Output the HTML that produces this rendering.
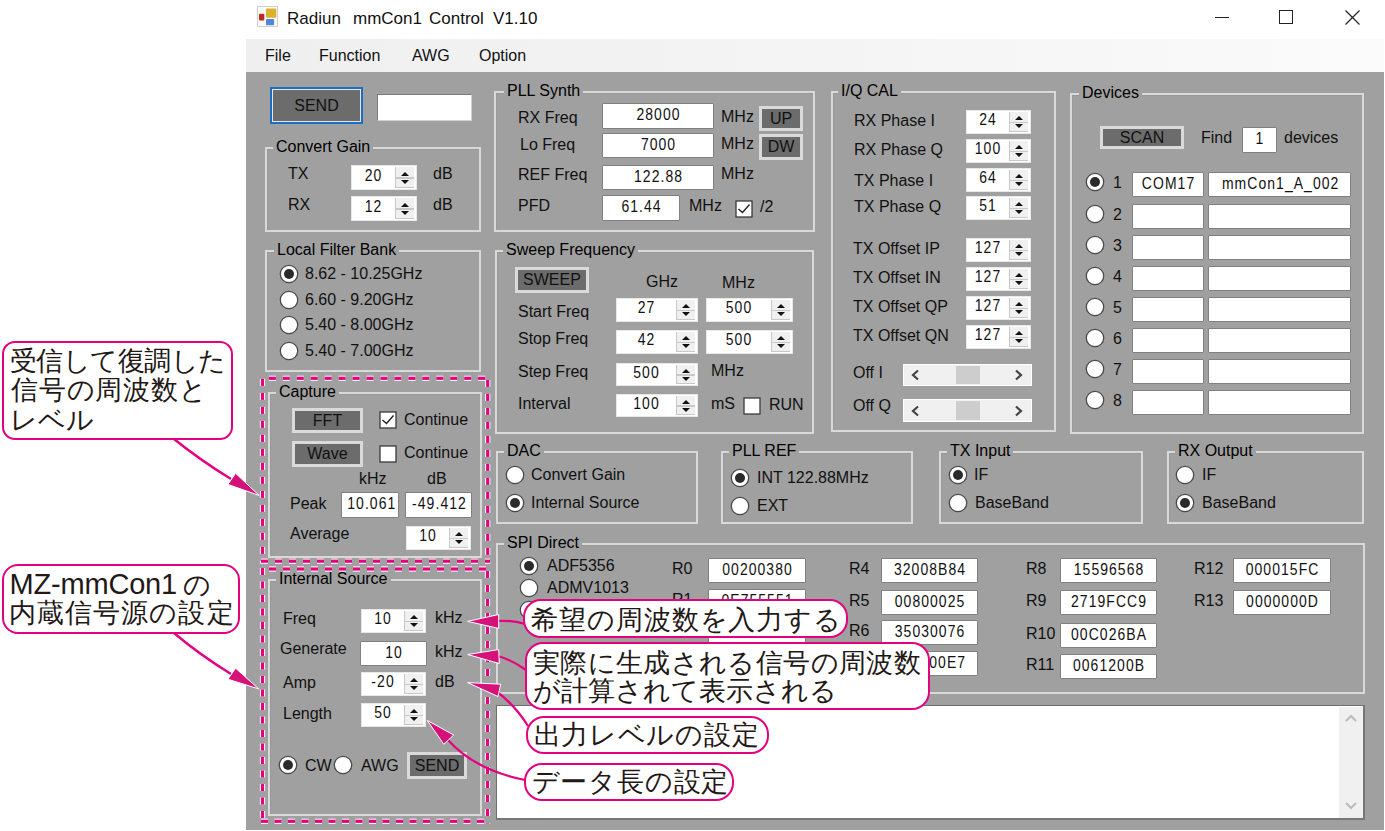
<!DOCTYPE html>
<html><head><meta charset="utf-8"><style>
html,body{margin:0;padding:0;width:1385px;height:831px;overflow:hidden;background:#fff;}
body{position:relative;font-family:"Liberation Sans", sans-serif;}
.t{position:absolute;white-space:nowrap;}
.c{position:absolute;text-align:center;white-space:nowrap;color:#111;}
.co{position:absolute;box-sizing:border-box;background:#fff;border:2.6px solid #e4007f;color:#231815;font-size:27.5px;line-height:28.5px;white-space:nowrap;}
</style></head><body>
<div style="position:absolute;left:246px;top:0px;width:1138px;height:39px;box-sizing:border-box;background:#fff;"></div><svg style="position:absolute;left:257px;top:6px" width="21" height="21"><rect x="0.5" y="0.5" width="20" height="20" fill="#fafafa" stroke="#cfcfcf"/><rect x="9" y="2.6" width="10.3" height="9.1" rx="1" fill="#ddb02a"/><rect x="2" y="7.8" width="5.3" height="6.7" rx="1" fill="#bf2a22"/><rect x="9" y="12.9" width="8.1" height="6.3" rx="1" fill="#4f88d6"/></svg><div class="t" style="left:287px;top:10px;font-size:17px;line-height:17px;color:#111;">Radiun</div><div class="t" style="left:353px;top:10px;font-size:17px;line-height:17px;color:#111;">mmCon1</div><div class="t" style="left:429px;top:10px;font-size:17px;line-height:17px;color:#111;">Control</div><div class="t" style="left:493px;top:10px;font-size:17px;line-height:17px;color:#111;">V1.10</div><div style="position:absolute;left:1215px;top:17px;width:14px;height:1px;box-sizing:border-box;background:#222;"></div><div style="position:absolute;left:1279px;top:10px;width:14px;height:14px;box-sizing:border-box;border:1px solid #222;"></div><svg style="position:absolute;left:1344px;top:9px" width="17" height="17"><path d="M1.5 1.5 L15.5 15.5 M15.5 1.5 L1.5 15.5" stroke="#222" stroke-width="1.2"/></svg><div style="position:absolute;left:246px;top:39px;width:1138px;height:33px;box-sizing:border-box;background:linear-gradient(90deg,#efefef,#f4f4f4 50%,#fbfbfb);"></div><div class="t" style="left:265px;top:48px;font-size:16px;line-height:16px;color:#111;">File</div><div class="t" style="left:319px;top:48px;font-size:16px;line-height:16px;color:#111;">Function</div><div class="t" style="left:412px;top:48px;font-size:16px;line-height:16px;color:#111;">AWG</div><div class="t" style="left:479px;top:48px;font-size:16px;line-height:16px;color:#111;">Option</div><div style="position:absolute;left:246px;top:72px;width:1138px;height:758px;box-sizing:border-box;background:#a0a0a0;"></div><div style="position:absolute;left:270px;top:87px;width:93px;height:37px;box-sizing:border-box;border:2px solid #1b6fc2;"></div><div style="position:absolute;left:272px;top:89px;width:89px;height:33px;box-sizing:border-box;background:#6c6c6c;border:1px solid #e6e6e6;"></div><div class="c" style="left:270px;top:87px;width:93px;height:37px;line-height:37px;font-size:16px;">SEND</div><div style="position:absolute;left:377px;top:94px;width:95px;height:27px;box-sizing:border-box;background:#fff;border:1px solid #e6e6e6;"></div><div style="position:absolute;left:377px;top:94px;width:95px;height:27px;box-sizing:border-box;border:1px solid #7c7c7c;border-right-color:#d0d0d0;border-bottom-color:#d0d0d0;"></div><div style="position:absolute;left:265px;top:147px;width:216px;height:85px;box-sizing:border-box;border:2px solid #d9d9d9;"></div><div style="position:absolute;left:267px;top:149px;width:212px;height:81px;box-sizing:border-box;border-left:1px solid #999;border-top:1px solid #999;"></div><div class="t gt" style="left:273px;top:138px;font-size:16px;line-height:18px;padding:0 3px;background:#a0a0a0">Convert Gain</div><div class="t" style="left:288px;top:166px;font-size:16px;line-height:16px;color:#111;">TX</div><div style="position:absolute;left:351px;top:165px;width:66px;height:25px;box-sizing:border-box;background:#fff;border:1px solid #e8e8e8;"></div><div style="position:absolute;left:395px;top:167px;width:19px;height:21px;box-sizing:border-box;background:#f0f0f0;border-left:1px solid #c8c8c8;border-bottom:1px solid #c8c8c8;"></div><div style="position:absolute;left:395px;top:177.0px;width:19px;height:1.5px;box-sizing:border-box;background:#c8c8c8;"></div><svg style="position:absolute;left:399.5px;top:169.5px" width="10" height="16"><path d="M1 6 L5 2 L9 6 Z M1 10 L9 10 L5 14 Z" fill="#111"/></svg><div class="c" style="left:351px;top:162.5px;width:44px;height:25px;line-height:25px;font-size:17px;letter-spacing:1.3px;transform:scaleX(.82);text-indent:1.3px">20</div><div class="t" style="left:433px;top:166px;font-size:16px;line-height:16px;color:#111;">dB</div><div class="t" style="left:288px;top:197px;font-size:16px;line-height:16px;color:#111;">RX</div><div style="position:absolute;left:351px;top:196px;width:66px;height:25px;box-sizing:border-box;background:#fff;border:1px solid #e8e8e8;"></div><div style="position:absolute;left:395px;top:198px;width:19px;height:21px;box-sizing:border-box;background:#f0f0f0;border-left:1px solid #c8c8c8;border-bottom:1px solid #c8c8c8;"></div><div style="position:absolute;left:395px;top:208.0px;width:19px;height:1.5px;box-sizing:border-box;background:#c8c8c8;"></div><svg style="position:absolute;left:399.5px;top:200.5px" width="10" height="16"><path d="M1 6 L5 2 L9 6 Z M1 10 L9 10 L5 14 Z" fill="#111"/></svg><div class="c" style="left:351px;top:193.5px;width:44px;height:25px;line-height:25px;font-size:17px;letter-spacing:1.3px;transform:scaleX(.82);text-indent:1.3px">12</div><div class="t" style="left:433px;top:197px;font-size:16px;line-height:16px;color:#111;">dB</div><div style="position:absolute;left:265px;top:250px;width:216px;height:122px;box-sizing:border-box;border:2px solid #d9d9d9;"></div><div style="position:absolute;left:267px;top:252px;width:212px;height:118px;box-sizing:border-box;border-left:1px solid #999;border-top:1px solid #999;"></div><div class="t gt" style="left:274px;top:241px;font-size:16px;line-height:18px;padding:0 3px;background:#a0a0a0">Local Filter Bank</div><svg style="position:absolute;left:278.5px;top:264.0px" width="20" height="20"><circle cx="10" cy="10" r="8.7" fill="#fff" stroke="#4a4a4a" stroke-width="1.3"/><circle cx="10" cy="10" r="5" fill="#2a2a2a"/></svg><div class="t" style="left:305px;top:266px;font-size:16px;line-height:16px;color:#111;">8.62 - 10.25GHz</div><svg style="position:absolute;left:278.5px;top:289.6px" width="20" height="20"><circle cx="10" cy="10" r="8.7" fill="#fff" stroke="#4a4a4a" stroke-width="1.3"/></svg><div class="t" style="left:305px;top:292px;font-size:16px;line-height:16px;color:#111;">6.60 - 9.20GHz</div><svg style="position:absolute;left:278.5px;top:315.2px" width="20" height="20"><circle cx="10" cy="10" r="8.7" fill="#fff" stroke="#4a4a4a" stroke-width="1.3"/></svg><div class="t" style="left:305px;top:317px;font-size:16px;line-height:16px;color:#111;">5.40 - 8.00GHz</div><svg style="position:absolute;left:278.5px;top:340.8px" width="20" height="20"><circle cx="10" cy="10" r="8.7" fill="#fff" stroke="#4a4a4a" stroke-width="1.3"/></svg><div class="t" style="left:305px;top:343px;font-size:16px;line-height:16px;color:#111;">5.40 - 7.00GHz</div><div style="position:absolute;left:268px;top:392px;width:214px;height:166px;box-sizing:border-box;border:2px solid #d9d9d9;"></div><div style="position:absolute;left:270px;top:394px;width:210px;height:162px;box-sizing:border-box;border-left:1px solid #999;border-top:1px solid #999;"></div><div class="t gt" style="left:276px;top:383px;font-size:16px;line-height:18px;padding:0 3px;background:#a0a0a0">Capture</div><div style="position:absolute;left:292px;top:408px;width:71px;height:25px;box-sizing:border-box;background:#6c6c6c;border:3px solid #dadada;"></div><div class="c" style="left:292px;top:408px;width:71px;height:25px;line-height:25px;font-size:16px;">FFT</div><div style="position:absolute;left:292px;top:441px;width:71px;height:26px;box-sizing:border-box;background:#6c6c6c;border:3px solid #dadada;"></div><div class="c" style="left:292px;top:441px;width:71px;height:26px;line-height:26px;font-size:16px;">Wave</div><svg style="position:absolute;left:379px;top:411px" width="18" height="18"><rect x="1" y="1" width="16" height="16" fill="#fff" stroke="#3a3a3a" stroke-width="1.3"/><path d="M3.5 9 L7.5 12.5 L14.5 4.5" fill="none" stroke="#222" stroke-width="1.4"/></svg><div class="t" style="left:404px;top:412px;font-size:16px;line-height:16px;color:#111;">Continue</div><svg style="position:absolute;left:379px;top:445px" width="18" height="18"><rect x="1" y="1" width="16" height="16" fill="#fff" stroke="#3a3a3a" stroke-width="1.3"/></svg><div class="t" style="left:404px;top:445px;font-size:16px;line-height:16px;color:#111;">Continue</div><div class="t" style="left:359px;top:471px;font-size:16px;line-height:16px;color:#111;">kHz</div><div class="t" style="left:427px;top:471px;font-size:16px;line-height:16px;color:#111;">dB</div><div class="t" style="left:290px;top:496px;font-size:16px;line-height:16px;color:#111;">Peak</div><div style="position:absolute;left:341px;top:492px;width:58px;height:26px;box-sizing:border-box;background:#fff;border:1px solid #808080;border-radius:1px;"></div><div class="c" style="left:341px;top:490.5px;width:58px;height:26px;line-height:26px;font-size:17px;letter-spacing:1.3px;transform:scaleX(.82);text-indent:1.3px">10.061</div><div style="position:absolute;left:405px;top:492px;width:67px;height:26px;box-sizing:border-box;background:#fff;border:1px solid #808080;border-radius:1px;"></div><div class="c" style="left:405px;top:490.5px;width:67px;height:26px;line-height:26px;font-size:17px;letter-spacing:1.3px;transform:scaleX(.82);text-indent:1.3px">-49.412</div><div class="t" style="left:290px;top:526px;font-size:16px;line-height:16px;color:#111;">Average</div><div style="position:absolute;left:406px;top:526px;width:65px;height:24px;box-sizing:border-box;background:#fff;border:1px solid #e8e8e8;"></div><div style="position:absolute;left:449px;top:528px;width:19px;height:20px;box-sizing:border-box;background:#f0f0f0;border-left:1px solid #c8c8c8;border-bottom:1px solid #c8c8c8;"></div><div style="position:absolute;left:449px;top:537.5px;width:19px;height:1.5px;box-sizing:border-box;background:#c8c8c8;"></div><svg style="position:absolute;left:453.5px;top:530.0px" width="10" height="16"><path d="M1 6 L5 2 L9 6 Z M1 10 L9 10 L5 14 Z" fill="#111"/></svg><div class="c" style="left:406px;top:523.5px;width:43px;height:24px;line-height:24px;font-size:17px;letter-spacing:1.3px;transform:scaleX(.82);text-indent:1.3px">10</div><div style="position:absolute;left:268px;top:579px;width:214px;height:237px;box-sizing:border-box;border:2px solid #d9d9d9;"></div><div style="position:absolute;left:270px;top:581px;width:210px;height:233px;box-sizing:border-box;border-left:1px solid #999;border-top:1px solid #999;"></div><div class="t gt" style="left:276px;top:570px;font-size:16px;line-height:18px;padding:0 3px;background:#a0a0a0">Internal Source</div><div class="t" style="left:283px;top:611px;font-size:16px;line-height:16px;color:#111;">Freq</div><div style="position:absolute;left:361px;top:609px;width:65px;height:24px;box-sizing:border-box;background:#fff;border:1px solid #e8e8e8;"></div><div style="position:absolute;left:404px;top:611px;width:19px;height:20px;box-sizing:border-box;background:#f0f0f0;border-left:1px solid #c8c8c8;border-bottom:1px solid #c8c8c8;"></div><div style="position:absolute;left:404px;top:620.5px;width:19px;height:1.5px;box-sizing:border-box;background:#c8c8c8;"></div><svg style="position:absolute;left:408.5px;top:613.0px" width="10" height="16"><path d="M1 6 L5 2 L9 6 Z M1 10 L9 10 L5 14 Z" fill="#111"/></svg><div class="c" style="left:361px;top:606.5px;width:43px;height:24px;line-height:24px;font-size:17px;letter-spacing:1.3px;transform:scaleX(.82);text-indent:1.3px">10</div><div class="t" style="left:435px;top:610px;font-size:16px;line-height:16px;color:#111;">kHz</div><div class="t" style="left:280px;top:641px;font-size:16px;line-height:16px;color:#111;">Generate</div><div style="position:absolute;left:360px;top:641px;width:67px;height:25px;box-sizing:border-box;background:#fff;border:1px solid #808080;border-radius:1px;"></div><div class="c" style="left:360px;top:639.5px;width:67px;height:25px;line-height:25px;font-size:17px;letter-spacing:1.3px;transform:scaleX(.82);text-indent:1.3px">10</div><div class="t" style="left:435px;top:644px;font-size:16px;line-height:16px;color:#111;">kHz</div><div class="t" style="left:283px;top:675px;font-size:16px;line-height:16px;color:#111;">Amp</div><div style="position:absolute;left:361px;top:672px;width:65px;height:24px;box-sizing:border-box;background:#fff;border:1px solid #e8e8e8;"></div><div style="position:absolute;left:404px;top:674px;width:19px;height:20px;box-sizing:border-box;background:#f0f0f0;border-left:1px solid #c8c8c8;border-bottom:1px solid #c8c8c8;"></div><div style="position:absolute;left:404px;top:683.5px;width:19px;height:1.5px;box-sizing:border-box;background:#c8c8c8;"></div><svg style="position:absolute;left:408.5px;top:676.0px" width="10" height="16"><path d="M1 6 L5 2 L9 6 Z M1 10 L9 10 L5 14 Z" fill="#111"/></svg><div class="c" style="left:361px;top:669.5px;width:43px;height:24px;line-height:24px;font-size:17px;letter-spacing:1.3px;transform:scaleX(.82);text-indent:1.3px">-20</div><div class="t" style="left:435px;top:674px;font-size:16px;line-height:16px;color:#111;">dB</div><div class="t" style="left:283px;top:706px;font-size:16px;line-height:16px;color:#111;">Length</div><div style="position:absolute;left:361px;top:703px;width:65px;height:24px;box-sizing:border-box;background:#fff;border:1px solid #e8e8e8;"></div><div style="position:absolute;left:404px;top:705px;width:19px;height:20px;box-sizing:border-box;background:#f0f0f0;border-left:1px solid #c8c8c8;border-bottom:1px solid #c8c8c8;"></div><div style="position:absolute;left:404px;top:714.5px;width:19px;height:1.5px;box-sizing:border-box;background:#c8c8c8;"></div><svg style="position:absolute;left:408.5px;top:707.0px" width="10" height="16"><path d="M1 6 L5 2 L9 6 Z M1 10 L9 10 L5 14 Z" fill="#111"/></svg><div class="c" style="left:361px;top:700.5px;width:43px;height:24px;line-height:24px;font-size:17px;letter-spacing:1.3px;transform:scaleX(.82);text-indent:1.3px">50</div><svg style="position:absolute;left:278px;top:755px" width="20" height="20"><circle cx="10" cy="10" r="8.7" fill="#fff" stroke="#4a4a4a" stroke-width="1.3"/><circle cx="10" cy="10" r="5" fill="#2a2a2a"/></svg><div class="t" style="left:305px;top:758px;font-size:16px;line-height:16px;color:#111;">CW</div><svg style="position:absolute;left:333px;top:755px" width="20" height="20"><circle cx="10" cy="10" r="8.7" fill="#fff" stroke="#4a4a4a" stroke-width="1.3"/></svg><div class="t" style="left:361px;top:758px;font-size:16px;line-height:16px;color:#111;">AWG</div><div style="position:absolute;left:407px;top:752px;width:60px;height:27px;box-sizing:border-box;background:#6c6c6c;border:3px solid #dadada;"></div><div class="c" style="left:407px;top:752px;width:60px;height:27px;line-height:27px;font-size:16px;">SEND</div><div style="position:absolute;left:494px;top:91px;width:321px;height:141px;box-sizing:border-box;border:2px solid #d9d9d9;"></div><div style="position:absolute;left:496px;top:93px;width:317px;height:137px;box-sizing:border-box;border-left:1px solid #999;border-top:1px solid #999;"></div><div class="t gt" style="left:504px;top:82px;font-size:16px;line-height:18px;padding:0 3px;background:#a0a0a0">PLL Synth</div><div class="t" style="left:518px;top:110px;font-size:16px;line-height:16px;color:#111;">RX Freq</div><div style="position:absolute;left:602px;top:103px;width:112px;height:26px;box-sizing:border-box;background:#fff;border:1px solid #808080;border-radius:1px;"></div><div class="c" style="left:602px;top:101.5px;width:112px;height:26px;line-height:26px;font-size:17px;letter-spacing:1.3px;transform:scaleX(.82);text-indent:1.3px">28000</div><div class="t" style="left:721px;top:109px;font-size:16px;line-height:16px;color:#111;">MHz</div><div style="position:absolute;left:759px;top:106px;width:44px;height:25px;box-sizing:border-box;background:#6c6c6c;border:3px solid #dadada;"></div><div class="c" style="left:759px;top:106px;width:44px;height:25px;line-height:25px;font-size:16px;">UP</div><div class="t" style="left:520px;top:137px;font-size:16px;line-height:16px;color:#111;">Lo Freq</div><div style="position:absolute;left:602px;top:133px;width:112px;height:25px;box-sizing:border-box;background:#fff;border:1px solid #808080;border-radius:1px;"></div><div class="c" style="left:602px;top:131.5px;width:112px;height:25px;line-height:25px;font-size:17px;letter-spacing:1.3px;transform:scaleX(.82);text-indent:1.3px">7000</div><div class="t" style="left:721px;top:136px;font-size:16px;line-height:16px;color:#111;">MHz</div><div style="position:absolute;left:759px;top:134px;width:44px;height:26px;box-sizing:border-box;background:#6c6c6c;border:3px solid #dadada;"></div><div class="c" style="left:759px;top:134px;width:44px;height:26px;line-height:26px;font-size:16px;">DW</div><div class="t" style="left:518px;top:167px;font-size:16px;line-height:16px;color:#111;">REF Freq</div><div style="position:absolute;left:602px;top:165px;width:112px;height:25px;box-sizing:border-box;background:#fff;border:1px solid #808080;border-radius:1px;"></div><div class="c" style="left:602px;top:163.5px;width:112px;height:25px;line-height:25px;font-size:17px;letter-spacing:1.3px;transform:scaleX(.82);text-indent:1.3px">122.88</div><div class="t" style="left:721px;top:166px;font-size:16px;line-height:16px;color:#111;">MHz</div><div class="t" style="left:518px;top:198px;font-size:16px;line-height:16px;color:#111;">PFD</div><div style="position:absolute;left:602px;top:195px;width:78px;height:26px;box-sizing:border-box;background:#fff;border:1px solid #808080;border-radius:1px;"></div><div class="c" style="left:602px;top:193.5px;width:78px;height:26px;line-height:26px;font-size:17px;letter-spacing:1.3px;transform:scaleX(.82);text-indent:1.3px">61.44</div><div class="t" style="left:689px;top:198px;font-size:16px;line-height:16px;color:#111;">MHz</div><svg style="position:absolute;left:735px;top:200px" width="18" height="18"><rect x="1" y="1" width="16" height="16" fill="#fff" stroke="#3a3a3a" stroke-width="1.3"/><path d="M3.5 9 L7.5 12.5 L14.5 4.5" fill="none" stroke="#222" stroke-width="1.4"/></svg><div class="t" style="left:760px;top:199px;font-size:16px;line-height:16px;color:#111;">/2</div><div style="position:absolute;left:495px;top:250px;width:319px;height:184px;box-sizing:border-box;border:2px solid #d9d9d9;"></div><div style="position:absolute;left:497px;top:252px;width:315px;height:180px;box-sizing:border-box;border-left:1px solid #999;border-top:1px solid #999;"></div><div class="t gt" style="left:503px;top:241px;font-size:16px;line-height:18px;padding:0 3px;background:#a0a0a0">Sweep Frequency</div><div style="position:absolute;left:515px;top:267px;width:74px;height:26px;box-sizing:border-box;background:#6c6c6c;border:3px solid #dadada;"></div><div class="c" style="left:515px;top:267px;width:74px;height:26px;line-height:26px;font-size:16px;">SWEEP</div><div class="t" style="left:646px;top:274px;font-size:16px;line-height:16px;color:#111;">GHz</div><div class="t" style="left:722px;top:275px;font-size:16px;line-height:16px;color:#111;">MHz</div><div class="t" style="left:518px;top:304px;font-size:16px;line-height:16px;color:#111;">Start Freq</div><div style="position:absolute;left:616px;top:298px;width:82px;height:24px;box-sizing:border-box;background:#fff;border:1px solid #e8e8e8;"></div><div style="position:absolute;left:676px;top:300px;width:19px;height:20px;box-sizing:border-box;background:#f0f0f0;border-left:1px solid #c8c8c8;border-bottom:1px solid #c8c8c8;"></div><div style="position:absolute;left:676px;top:309.5px;width:19px;height:1.5px;box-sizing:border-box;background:#c8c8c8;"></div><svg style="position:absolute;left:680.5px;top:302.0px" width="10" height="16"><path d="M1 6 L5 2 L9 6 Z M1 10 L9 10 L5 14 Z" fill="#111"/></svg><div class="c" style="left:616px;top:295.5px;width:60px;height:24px;line-height:24px;font-size:17px;letter-spacing:1.3px;transform:scaleX(.82);text-indent:1.3px">27</div><div style="position:absolute;left:706px;top:298px;width:87px;height:24px;box-sizing:border-box;background:#fff;border:1px solid #e8e8e8;"></div><div style="position:absolute;left:771px;top:300px;width:19px;height:20px;box-sizing:border-box;background:#f0f0f0;border-left:1px solid #c8c8c8;border-bottom:1px solid #c8c8c8;"></div><div style="position:absolute;left:771px;top:309.5px;width:19px;height:1.5px;box-sizing:border-box;background:#c8c8c8;"></div><svg style="position:absolute;left:775.5px;top:302.0px" width="10" height="16"><path d="M1 6 L5 2 L9 6 Z M1 10 L9 10 L5 14 Z" fill="#111"/></svg><div class="c" style="left:706px;top:295.5px;width:65px;height:24px;line-height:24px;font-size:17px;letter-spacing:1.3px;transform:scaleX(.82);text-indent:1.3px">500</div><div class="t" style="left:518px;top:331px;font-size:16px;line-height:16px;color:#111;">Stop Freq</div><div style="position:absolute;left:616px;top:330px;width:82px;height:24px;box-sizing:border-box;background:#fff;border:1px solid #e8e8e8;"></div><div style="position:absolute;left:676px;top:332px;width:19px;height:20px;box-sizing:border-box;background:#f0f0f0;border-left:1px solid #c8c8c8;border-bottom:1px solid #c8c8c8;"></div><div style="position:absolute;left:676px;top:341.5px;width:19px;height:1.5px;box-sizing:border-box;background:#c8c8c8;"></div><svg style="position:absolute;left:680.5px;top:334.0px" width="10" height="16"><path d="M1 6 L5 2 L9 6 Z M1 10 L9 10 L5 14 Z" fill="#111"/></svg><div class="c" style="left:616px;top:327.5px;width:60px;height:24px;line-height:24px;font-size:17px;letter-spacing:1.3px;transform:scaleX(.82);text-indent:1.3px">42</div><div style="position:absolute;left:706px;top:330px;width:87px;height:24px;box-sizing:border-box;background:#fff;border:1px solid #e8e8e8;"></div><div style="position:absolute;left:771px;top:332px;width:19px;height:20px;box-sizing:border-box;background:#f0f0f0;border-left:1px solid #c8c8c8;border-bottom:1px solid #c8c8c8;"></div><div style="position:absolute;left:771px;top:341.5px;width:19px;height:1.5px;box-sizing:border-box;background:#c8c8c8;"></div><svg style="position:absolute;left:775.5px;top:334.0px" width="10" height="16"><path d="M1 6 L5 2 L9 6 Z M1 10 L9 10 L5 14 Z" fill="#111"/></svg><div class="c" style="left:706px;top:327.5px;width:65px;height:24px;line-height:24px;font-size:17px;letter-spacing:1.3px;transform:scaleX(.82);text-indent:1.3px">500</div><div class="t" style="left:518px;top:364px;font-size:16px;line-height:16px;color:#111;">Step Freq</div><div style="position:absolute;left:616px;top:363px;width:82px;height:23px;box-sizing:border-box;background:#fff;border:1px solid #e8e8e8;"></div><div style="position:absolute;left:676px;top:365px;width:19px;height:19px;box-sizing:border-box;background:#f0f0f0;border-left:1px solid #c8c8c8;border-bottom:1px solid #c8c8c8;"></div><div style="position:absolute;left:676px;top:374.0px;width:19px;height:1.5px;box-sizing:border-box;background:#c8c8c8;"></div><svg style="position:absolute;left:680.5px;top:366.5px" width="10" height="16"><path d="M1 6 L5 2 L9 6 Z M1 10 L9 10 L5 14 Z" fill="#111"/></svg><div class="c" style="left:616px;top:360.5px;width:60px;height:23px;line-height:23px;font-size:17px;letter-spacing:1.3px;transform:scaleX(.82);text-indent:1.3px">500</div><div class="t" style="left:711px;top:363px;font-size:16px;line-height:16px;color:#111;">MHz</div><div class="t" style="left:518px;top:396px;font-size:16px;line-height:16px;color:#111;">Interval</div><div style="position:absolute;left:616px;top:394px;width:82px;height:23px;box-sizing:border-box;background:#fff;border:1px solid #e8e8e8;"></div><div style="position:absolute;left:676px;top:396px;width:19px;height:19px;box-sizing:border-box;background:#f0f0f0;border-left:1px solid #c8c8c8;border-bottom:1px solid #c8c8c8;"></div><div style="position:absolute;left:676px;top:405.0px;width:19px;height:1.5px;box-sizing:border-box;background:#c8c8c8;"></div><svg style="position:absolute;left:680.5px;top:397.5px" width="10" height="16"><path d="M1 6 L5 2 L9 6 Z M1 10 L9 10 L5 14 Z" fill="#111"/></svg><div class="c" style="left:616px;top:391.5px;width:60px;height:23px;line-height:23px;font-size:17px;letter-spacing:1.3px;transform:scaleX(.82);text-indent:1.3px">100</div><div class="t" style="left:711px;top:396px;font-size:16px;line-height:16px;color:#111;">mS</div><svg style="position:absolute;left:743px;top:397px" width="18" height="18"><rect x="1" y="1" width="16" height="16" fill="#fff" stroke="#3a3a3a" stroke-width="1.3"/></svg><div class="t" style="left:769px;top:397px;font-size:16px;line-height:16px;color:#111;">RUN</div><div style="position:absolute;left:831px;top:91px;width:225px;height:341px;box-sizing:border-box;border:2px solid #d9d9d9;"></div><div style="position:absolute;left:833px;top:93px;width:221px;height:337px;box-sizing:border-box;border-left:1px solid #999;border-top:1px solid #999;"></div><div class="t gt" style="left:838px;top:82px;font-size:16px;line-height:18px;padding:0 3px;background:#a0a0a0">I/Q CAL</div><div class="t" style="left:854px;top:113px;font-size:16px;line-height:16px;color:#111;">RX Phase I</div><div style="position:absolute;left:966px;top:110px;width:65px;height:24px;box-sizing:border-box;background:#fff;border:1px solid #e8e8e8;"></div><div style="position:absolute;left:1009px;top:112px;width:19px;height:20px;box-sizing:border-box;background:#f0f0f0;border-left:1px solid #c8c8c8;border-bottom:1px solid #c8c8c8;"></div><div style="position:absolute;left:1009px;top:121.5px;width:19px;height:1.5px;box-sizing:border-box;background:#c8c8c8;"></div><svg style="position:absolute;left:1013.5px;top:114.0px" width="10" height="16"><path d="M1 6 L5 2 L9 6 Z M1 10 L9 10 L5 14 Z" fill="#111"/></svg><div class="c" style="left:966px;top:107.5px;width:43px;height:24px;line-height:24px;font-size:17px;letter-spacing:1.3px;transform:scaleX(.82);text-indent:1.3px">24</div><div class="t" style="left:854px;top:142px;font-size:16px;line-height:16px;color:#111;">RX Phase Q</div><div style="position:absolute;left:966px;top:139px;width:65px;height:24px;box-sizing:border-box;background:#fff;border:1px solid #e8e8e8;"></div><div style="position:absolute;left:1009px;top:141px;width:19px;height:20px;box-sizing:border-box;background:#f0f0f0;border-left:1px solid #c8c8c8;border-bottom:1px solid #c8c8c8;"></div><div style="position:absolute;left:1009px;top:150.5px;width:19px;height:1.5px;box-sizing:border-box;background:#c8c8c8;"></div><svg style="position:absolute;left:1013.5px;top:143.0px" width="10" height="16"><path d="M1 6 L5 2 L9 6 Z M1 10 L9 10 L5 14 Z" fill="#111"/></svg><div class="c" style="left:966px;top:136.5px;width:43px;height:24px;line-height:24px;font-size:17px;letter-spacing:1.3px;transform:scaleX(.82);text-indent:1.3px">100</div><div class="t" style="left:854px;top:173px;font-size:16px;line-height:16px;color:#111;">TX Phase I</div><div style="position:absolute;left:966px;top:168px;width:65px;height:24px;box-sizing:border-box;background:#fff;border:1px solid #e8e8e8;"></div><div style="position:absolute;left:1009px;top:170px;width:19px;height:20px;box-sizing:border-box;background:#f0f0f0;border-left:1px solid #c8c8c8;border-bottom:1px solid #c8c8c8;"></div><div style="position:absolute;left:1009px;top:179.5px;width:19px;height:1.5px;box-sizing:border-box;background:#c8c8c8;"></div><svg style="position:absolute;left:1013.5px;top:172.0px" width="10" height="16"><path d="M1 6 L5 2 L9 6 Z M1 10 L9 10 L5 14 Z" fill="#111"/></svg><div class="c" style="left:966px;top:165.5px;width:43px;height:24px;line-height:24px;font-size:17px;letter-spacing:1.3px;transform:scaleX(.82);text-indent:1.3px">64</div><div class="t" style="left:854px;top:199px;font-size:16px;line-height:16px;color:#111;">TX Phase Q</div><div style="position:absolute;left:966px;top:196px;width:65px;height:24px;box-sizing:border-box;background:#fff;border:1px solid #e8e8e8;"></div><div style="position:absolute;left:1009px;top:198px;width:19px;height:20px;box-sizing:border-box;background:#f0f0f0;border-left:1px solid #c8c8c8;border-bottom:1px solid #c8c8c8;"></div><div style="position:absolute;left:1009px;top:207.5px;width:19px;height:1.5px;box-sizing:border-box;background:#c8c8c8;"></div><svg style="position:absolute;left:1013.5px;top:200.0px" width="10" height="16"><path d="M1 6 L5 2 L9 6 Z M1 10 L9 10 L5 14 Z" fill="#111"/></svg><div class="c" style="left:966px;top:193.5px;width:43px;height:24px;line-height:24px;font-size:17px;letter-spacing:1.3px;transform:scaleX(.82);text-indent:1.3px">51</div><div class="t" style="left:853px;top:241px;font-size:16px;line-height:16px;color:#111;">TX Offset IP</div><div style="position:absolute;left:966px;top:238px;width:65px;height:24px;box-sizing:border-box;background:#fff;border:1px solid #e8e8e8;"></div><div style="position:absolute;left:1009px;top:240px;width:19px;height:20px;box-sizing:border-box;background:#f0f0f0;border-left:1px solid #c8c8c8;border-bottom:1px solid #c8c8c8;"></div><div style="position:absolute;left:1009px;top:249.5px;width:19px;height:1.5px;box-sizing:border-box;background:#c8c8c8;"></div><svg style="position:absolute;left:1013.5px;top:242.0px" width="10" height="16"><path d="M1 6 L5 2 L9 6 Z M1 10 L9 10 L5 14 Z" fill="#111"/></svg><div class="c" style="left:966px;top:235.5px;width:43px;height:24px;line-height:24px;font-size:17px;letter-spacing:1.3px;transform:scaleX(.82);text-indent:1.3px">127</div><div class="t" style="left:853px;top:270px;font-size:16px;line-height:16px;color:#111;">TX Offset IN</div><div style="position:absolute;left:966px;top:267px;width:65px;height:24px;box-sizing:border-box;background:#fff;border:1px solid #e8e8e8;"></div><div style="position:absolute;left:1009px;top:269px;width:19px;height:20px;box-sizing:border-box;background:#f0f0f0;border-left:1px solid #c8c8c8;border-bottom:1px solid #c8c8c8;"></div><div style="position:absolute;left:1009px;top:278.5px;width:19px;height:1.5px;box-sizing:border-box;background:#c8c8c8;"></div><svg style="position:absolute;left:1013.5px;top:271.0px" width="10" height="16"><path d="M1 6 L5 2 L9 6 Z M1 10 L9 10 L5 14 Z" fill="#111"/></svg><div class="c" style="left:966px;top:264.5px;width:43px;height:24px;line-height:24px;font-size:17px;letter-spacing:1.3px;transform:scaleX(.82);text-indent:1.3px">127</div><div class="t" style="left:853px;top:299px;font-size:16px;line-height:16px;color:#111;">TX Offset QP</div><div style="position:absolute;left:966px;top:296px;width:65px;height:24px;box-sizing:border-box;background:#fff;border:1px solid #e8e8e8;"></div><div style="position:absolute;left:1009px;top:298px;width:19px;height:20px;box-sizing:border-box;background:#f0f0f0;border-left:1px solid #c8c8c8;border-bottom:1px solid #c8c8c8;"></div><div style="position:absolute;left:1009px;top:307.5px;width:19px;height:1.5px;box-sizing:border-box;background:#c8c8c8;"></div><svg style="position:absolute;left:1013.5px;top:300.0px" width="10" height="16"><path d="M1 6 L5 2 L9 6 Z M1 10 L9 10 L5 14 Z" fill="#111"/></svg><div class="c" style="left:966px;top:293.5px;width:43px;height:24px;line-height:24px;font-size:17px;letter-spacing:1.3px;transform:scaleX(.82);text-indent:1.3px">127</div><div class="t" style="left:853px;top:328px;font-size:16px;line-height:16px;color:#111;">TX Offset QN</div><div style="position:absolute;left:966px;top:325px;width:65px;height:24px;box-sizing:border-box;background:#fff;border:1px solid #e8e8e8;"></div><div style="position:absolute;left:1009px;top:327px;width:19px;height:20px;box-sizing:border-box;background:#f0f0f0;border-left:1px solid #c8c8c8;border-bottom:1px solid #c8c8c8;"></div><div style="position:absolute;left:1009px;top:336.5px;width:19px;height:1.5px;box-sizing:border-box;background:#c8c8c8;"></div><svg style="position:absolute;left:1013.5px;top:329.0px" width="10" height="16"><path d="M1 6 L5 2 L9 6 Z M1 10 L9 10 L5 14 Z" fill="#111"/></svg><div class="c" style="left:966px;top:322.5px;width:43px;height:24px;line-height:24px;font-size:17px;letter-spacing:1.3px;transform:scaleX(.82);text-indent:1.3px">127</div><div class="t" style="left:853px;top:365px;font-size:16px;line-height:16px;color:#111;">Off I</div><div style="position:absolute;left:903px;top:364px;width:129px;height:22px;box-sizing:border-box;background:#f0f0f0;border:1px solid #fff;"></div><div style="position:absolute;left:956px;top:366px;width:24px;height:18px;box-sizing:border-box;background:#cdcdcd;"></div><svg style="position:absolute;left:910px;top:369.0px" width="11" height="12"><path d="M8 1.5 L3 6 L8 10.5" fill="none" stroke="#444" stroke-width="2.2"/></svg><svg style="position:absolute;left:1013px;top:369.0px" width="11" height="12"><path d="M3 1.5 L8 6 L3 10.5" fill="none" stroke="#444" stroke-width="2.2"/></svg><div class="t" style="left:853px;top:398px;font-size:16px;line-height:16px;color:#111;">Off Q</div><div style="position:absolute;left:903px;top:399px;width:129px;height:23px;box-sizing:border-box;background:#f0f0f0;border:1px solid #fff;"></div><div style="position:absolute;left:956px;top:401px;width:24px;height:19px;box-sizing:border-box;background:#cdcdcd;"></div><svg style="position:absolute;left:910px;top:404.5px" width="11" height="12"><path d="M8 1.5 L3 6 L8 10.5" fill="none" stroke="#444" stroke-width="2.2"/></svg><svg style="position:absolute;left:1013px;top:404.5px" width="11" height="12"><path d="M3 1.5 L8 6 L3 10.5" fill="none" stroke="#444" stroke-width="2.2"/></svg><div style="position:absolute;left:1070px;top:93px;width:294px;height:341px;box-sizing:border-box;border:2px solid #d9d9d9;"></div><div style="position:absolute;left:1072px;top:95px;width:290px;height:337px;box-sizing:border-box;border-left:1px solid #999;border-top:1px solid #999;"></div><div class="t gt" style="left:1079px;top:84px;font-size:16px;line-height:18px;padding:0 3px;background:#a0a0a0">Devices</div><div style="position:absolute;left:1100px;top:126px;width:84px;height:23px;box-sizing:border-box;background:#6c6c6c;border:3px solid #dadada;"></div><div class="c" style="left:1100px;top:126px;width:84px;height:23px;line-height:23px;font-size:16px;">SCAN</div><div class="t" style="left:1201px;top:130px;font-size:16px;line-height:16px;color:#111;">Find</div><div style="position:absolute;left:1242px;top:127px;width:35px;height:26px;box-sizing:border-box;background:#fff;border:1px solid #808080;border-radius:1px;"></div><div class="c" style="left:1242px;top:125.5px;width:35px;height:26px;line-height:26px;font-size:17px;letter-spacing:1.3px;transform:scaleX(.82);text-indent:1.3px">1</div><div class="t" style="left:1284px;top:130px;font-size:16px;line-height:16px;color:#111;">devices</div><svg style="position:absolute;left:1084.7px;top:171.5px" width="20" height="20"><circle cx="10" cy="10" r="8.7" fill="#fff" stroke="#4a4a4a" stroke-width="1.3"/><circle cx="10" cy="10" r="5" fill="#2a2a2a"/></svg><div class="t" style="left:1113px;top:175px;font-size:16px;line-height:16px;color:#111;">1</div><div style="position:absolute;left:1132px;top:172px;width:72px;height:25px;box-sizing:border-box;background:#fff;border:1px solid #808080;border-radius:1px;"></div><div class="c" style="left:1132px;top:170.5px;width:72px;height:25px;line-height:25px;font-size:17px;letter-spacing:1.3px;transform:scaleX(.82);text-indent:1.3px">COM17</div><div style="position:absolute;left:1208px;top:172px;width:143px;height:25px;box-sizing:border-box;background:#fff;border:1px solid #808080;border-radius:1px;"></div><div class="c" style="left:1208px;top:170.5px;width:143px;height:25px;line-height:25px;font-size:17px;letter-spacing:1.3px;transform:scaleX(.82);text-indent:1.3px">mmCon1_A_002</div><svg style="position:absolute;left:1084.7px;top:203.5px" width="20" height="20"><circle cx="10" cy="10" r="8.7" fill="#fff" stroke="#4a4a4a" stroke-width="1.3"/></svg><div class="t" style="left:1113px;top:207px;font-size:16px;line-height:16px;color:#111;">2</div><div style="position:absolute;left:1132px;top:204px;width:72px;height:25px;box-sizing:border-box;background:#fff;border:1px solid #808080;border-radius:1px;"></div><div style="position:absolute;left:1208px;top:204px;width:143px;height:25px;box-sizing:border-box;background:#fff;border:1px solid #808080;border-radius:1px;"></div><svg style="position:absolute;left:1084.7px;top:234.5px" width="20" height="20"><circle cx="10" cy="10" r="8.7" fill="#fff" stroke="#4a4a4a" stroke-width="1.3"/></svg><div class="t" style="left:1113px;top:238px;font-size:16px;line-height:16px;color:#111;">3</div><div style="position:absolute;left:1132px;top:235px;width:72px;height:25px;box-sizing:border-box;background:#fff;border:1px solid #808080;border-radius:1px;"></div><div style="position:absolute;left:1208px;top:235px;width:143px;height:25px;box-sizing:border-box;background:#fff;border:1px solid #808080;border-radius:1px;"></div><svg style="position:absolute;left:1084.7px;top:265.5px" width="20" height="20"><circle cx="10" cy="10" r="8.7" fill="#fff" stroke="#4a4a4a" stroke-width="1.3"/></svg><div class="t" style="left:1113px;top:269px;font-size:16px;line-height:16px;color:#111;">4</div><div style="position:absolute;left:1132px;top:266px;width:72px;height:25px;box-sizing:border-box;background:#fff;border:1px solid #808080;border-radius:1px;"></div><div style="position:absolute;left:1208px;top:266px;width:143px;height:25px;box-sizing:border-box;background:#fff;border:1px solid #808080;border-radius:1px;"></div><svg style="position:absolute;left:1084.7px;top:296.5px" width="20" height="20"><circle cx="10" cy="10" r="8.7" fill="#fff" stroke="#4a4a4a" stroke-width="1.3"/></svg><div class="t" style="left:1113px;top:300px;font-size:16px;line-height:16px;color:#111;">5</div><div style="position:absolute;left:1132px;top:297px;width:72px;height:25px;box-sizing:border-box;background:#fff;border:1px solid #808080;border-radius:1px;"></div><div style="position:absolute;left:1208px;top:297px;width:143px;height:25px;box-sizing:border-box;background:#fff;border:1px solid #808080;border-radius:1px;"></div><svg style="position:absolute;left:1084.7px;top:327.5px" width="20" height="20"><circle cx="10" cy="10" r="8.7" fill="#fff" stroke="#4a4a4a" stroke-width="1.3"/></svg><div class="t" style="left:1113px;top:331px;font-size:16px;line-height:16px;color:#111;">6</div><div style="position:absolute;left:1132px;top:328px;width:72px;height:25px;box-sizing:border-box;background:#fff;border:1px solid #808080;border-radius:1px;"></div><div style="position:absolute;left:1208px;top:328px;width:143px;height:25px;box-sizing:border-box;background:#fff;border:1px solid #808080;border-radius:1px;"></div><svg style="position:absolute;left:1084.7px;top:358.5px" width="20" height="20"><circle cx="10" cy="10" r="8.7" fill="#fff" stroke="#4a4a4a" stroke-width="1.3"/></svg><div class="t" style="left:1113px;top:362px;font-size:16px;line-height:16px;color:#111;">7</div><div style="position:absolute;left:1132px;top:359px;width:72px;height:25px;box-sizing:border-box;background:#fff;border:1px solid #808080;border-radius:1px;"></div><div style="position:absolute;left:1208px;top:359px;width:143px;height:25px;box-sizing:border-box;background:#fff;border:1px solid #808080;border-radius:1px;"></div><svg style="position:absolute;left:1084.7px;top:389.5px" width="20" height="20"><circle cx="10" cy="10" r="8.7" fill="#fff" stroke="#4a4a4a" stroke-width="1.3"/></svg><div class="t" style="left:1113px;top:393px;font-size:16px;line-height:16px;color:#111;">8</div><div style="position:absolute;left:1132px;top:390px;width:72px;height:25px;box-sizing:border-box;background:#fff;border:1px solid #808080;border-radius:1px;"></div><div style="position:absolute;left:1208px;top:390px;width:143px;height:25px;box-sizing:border-box;background:#fff;border:1px solid #808080;border-radius:1px;"></div><div style="position:absolute;left:496px;top:451px;width:202px;height:73px;box-sizing:border-box;border:2px solid #d9d9d9;"></div><div style="position:absolute;left:498px;top:453px;width:198px;height:69px;box-sizing:border-box;border-left:1px solid #999;border-top:1px solid #999;"></div><div class="t gt" style="left:504px;top:442px;font-size:16px;line-height:18px;padding:0 3px;background:#a0a0a0">DAC</div><svg style="position:absolute;left:505px;top:465.4px" width="20" height="20"><circle cx="10" cy="10" r="8.7" fill="#fff" stroke="#4a4a4a" stroke-width="1.3"/></svg><div class="t" style="left:531px;top:467px;font-size:16px;line-height:16px;color:#111;">Convert Gain</div><svg style="position:absolute;left:505px;top:493px" width="20" height="20"><circle cx="10" cy="10" r="8.7" fill="#fff" stroke="#4a4a4a" stroke-width="1.3"/><circle cx="10" cy="10" r="5" fill="#2a2a2a"/></svg><div class="t" style="left:531px;top:495px;font-size:16px;line-height:16px;color:#111;">Internal Source</div><div style="position:absolute;left:721px;top:451px;width:192px;height:73px;box-sizing:border-box;border:2px solid #d9d9d9;"></div><div style="position:absolute;left:723px;top:453px;width:188px;height:69px;box-sizing:border-box;border-left:1px solid #999;border-top:1px solid #999;"></div><div class="t gt" style="left:729px;top:442px;font-size:16px;line-height:18px;padding:0 3px;background:#a0a0a0">PLL REF</div><svg style="position:absolute;left:730px;top:468.3px" width="20" height="20"><circle cx="10" cy="10" r="8.7" fill="#fff" stroke="#4a4a4a" stroke-width="1.3"/><circle cx="10" cy="10" r="5" fill="#2a2a2a"/></svg><div class="t" style="left:757px;top:470px;font-size:16px;line-height:16px;color:#111;">INT 122.88MHz</div><svg style="position:absolute;left:730px;top:496.2px" width="20" height="20"><circle cx="10" cy="10" r="8.7" fill="#fff" stroke="#4a4a4a" stroke-width="1.3"/></svg><div class="t" style="left:757px;top:498px;font-size:16px;line-height:16px;color:#111;">EXT</div><div style="position:absolute;left:939px;top:451px;width:204px;height:73px;box-sizing:border-box;border:2px solid #d9d9d9;"></div><div style="position:absolute;left:941px;top:453px;width:200px;height:69px;box-sizing:border-box;border-left:1px solid #999;border-top:1px solid #999;"></div><div class="t gt" style="left:947px;top:442px;font-size:16px;line-height:18px;padding:0 3px;background:#a0a0a0">TX Input</div><svg style="position:absolute;left:947.5px;top:464.7px" width="20" height="20"><circle cx="10" cy="10" r="8.7" fill="#fff" stroke="#4a4a4a" stroke-width="1.3"/><circle cx="10" cy="10" r="5" fill="#2a2a2a"/></svg><div class="t" style="left:974px;top:467px;font-size:16px;line-height:16px;color:#111;">IF</div><svg style="position:absolute;left:947.5px;top:492.9px" width="20" height="20"><circle cx="10" cy="10" r="8.7" fill="#fff" stroke="#4a4a4a" stroke-width="1.3"/></svg><div class="t" style="left:975px;top:495px;font-size:16px;line-height:16px;color:#111;">BaseBand</div><div style="position:absolute;left:1167px;top:451px;width:197px;height:73px;box-sizing:border-box;border:2px solid #d9d9d9;"></div><div style="position:absolute;left:1169px;top:453px;width:193px;height:69px;box-sizing:border-box;border-left:1px solid #999;border-top:1px solid #999;"></div><div class="t gt" style="left:1175px;top:442px;font-size:16px;line-height:18px;padding:0 3px;background:#a0a0a0">RX Output</div><svg style="position:absolute;left:1175px;top:464.7px" width="20" height="20"><circle cx="10" cy="10" r="8.7" fill="#fff" stroke="#4a4a4a" stroke-width="1.3"/></svg><div class="t" style="left:1202px;top:467px;font-size:16px;line-height:16px;color:#111;">IF</div><svg style="position:absolute;left:1175px;top:492.9px" width="20" height="20"><circle cx="10" cy="10" r="8.7" fill="#fff" stroke="#4a4a4a" stroke-width="1.3"/><circle cx="10" cy="10" r="5" fill="#2a2a2a"/></svg><div class="t" style="left:1202px;top:495px;font-size:16px;line-height:16px;color:#111;">BaseBand</div><div style="position:absolute;left:496px;top:543px;width:869px;height:151px;box-sizing:border-box;border:2px solid #d9d9d9;"></div><div style="position:absolute;left:498px;top:545px;width:865px;height:147px;box-sizing:border-box;border-left:1px solid #999;border-top:1px solid #999;"></div><div class="t gt" style="left:504px;top:534px;font-size:16px;line-height:18px;padding:0 3px;background:#a0a0a0">SPI Direct</div><svg style="position:absolute;left:519.4px;top:556px" width="20" height="20"><circle cx="10" cy="10" r="8.7" fill="#fff" stroke="#4a4a4a" stroke-width="1.3"/><circle cx="10" cy="10" r="5" fill="#2a2a2a"/></svg><div class="t" style="left:547px;top:558px;font-size:16px;line-height:16px;color:#111;">ADF5356</div><svg style="position:absolute;left:519.4px;top:578px" width="20" height="20"><circle cx="10" cy="10" r="8.7" fill="#fff" stroke="#4a4a4a" stroke-width="1.3"/></svg><div class="t" style="left:547px;top:580px;font-size:16px;line-height:16px;color:#111;">ADMV1013</div><svg style="position:absolute;left:519.4px;top:600px" width="20" height="20"><circle cx="10" cy="10" r="8.7" fill="#fff" stroke="#4a4a4a" stroke-width="1.3"/></svg><div class="t" style="left:672px;top:561px;font-size:16px;line-height:16px;color:#111;">R0</div><div style="position:absolute;left:708px;top:558px;width:98px;height:25px;box-sizing:border-box;background:#fff;border:1px solid #808080;border-radius:1px;"></div><div class="c" style="left:708px;top:556.5px;width:98px;height:25px;line-height:25px;font-size:17px;letter-spacing:1.3px;transform:scaleX(.82);text-indent:1.3px">00200380</div><div class="t" style="left:672px;top:592px;font-size:16px;line-height:16px;color:#111;">R1</div><div style="position:absolute;left:708px;top:589px;width:98px;height:25px;box-sizing:border-box;background:#fff;border:1px solid #808080;border-radius:1px;"></div><div class="c" style="left:708px;top:587.5px;width:98px;height:25px;line-height:25px;font-size:17px;letter-spacing:1.3px;transform:scaleX(.82);text-indent:1.3px">0E755551</div><div class="t" style="left:672px;top:623px;font-size:16px;line-height:16px;color:#111;">R2</div><div style="position:absolute;left:708px;top:620px;width:98px;height:25px;box-sizing:border-box;background:#fff;border:1px solid #808080;border-radius:1px;"></div><div class="c" style="left:708px;top:618.5px;width:98px;height:25px;line-height:25px;font-size:17px;letter-spacing:1.3px;transform:scaleX(.82);text-indent:1.3px">00000000</div><div class="t" style="left:672px;top:654px;font-size:16px;line-height:16px;color:#111;">R3</div><div style="position:absolute;left:708px;top:651px;width:98px;height:25px;box-sizing:border-box;background:#fff;border:1px solid #808080;border-radius:1px;"></div><div class="c" style="left:708px;top:649.5px;width:98px;height:25px;line-height:25px;font-size:17px;letter-spacing:1.3px;transform:scaleX(.82);text-indent:1.3px">00000000</div><div class="t" style="left:849px;top:561px;font-size:16px;line-height:16px;color:#111;">R4</div><div style="position:absolute;left:881px;top:558px;width:97px;height:25px;box-sizing:border-box;background:#fff;border:1px solid #808080;border-radius:1px;"></div><div class="c" style="left:881px;top:556.5px;width:97px;height:25px;line-height:25px;font-size:17px;letter-spacing:1.3px;transform:scaleX(.82);text-indent:1.3px">32008B84</div><div class="t" style="left:849px;top:593px;font-size:16px;line-height:16px;color:#111;">R5</div><div style="position:absolute;left:881px;top:590px;width:97px;height:25px;box-sizing:border-box;background:#fff;border:1px solid #808080;border-radius:1px;"></div><div class="c" style="left:881px;top:588.5px;width:97px;height:25px;line-height:25px;font-size:17px;letter-spacing:1.3px;transform:scaleX(.82);text-indent:1.3px">00800025</div><div class="t" style="left:849px;top:623px;font-size:16px;line-height:16px;color:#111;">R6</div><div style="position:absolute;left:881px;top:620px;width:97px;height:25px;box-sizing:border-box;background:#fff;border:1px solid #808080;border-radius:1px;"></div><div class="c" style="left:881px;top:618.5px;width:97px;height:25px;line-height:25px;font-size:17px;letter-spacing:1.3px;transform:scaleX(.82);text-indent:1.3px">35030076</div><div class="t" style="left:849px;top:654px;font-size:16px;line-height:16px;color:#111;">R7</div><div style="position:absolute;left:881px;top:651px;width:97px;height:25px;box-sizing:border-box;background:#fff;border:1px solid #808080;border-radius:1px;"></div><div class="c" style="left:881px;top:649.5px;width:97px;height:25px;line-height:25px;font-size:17px;letter-spacing:1.3px;transform:scaleX(.82);text-indent:1.3px">000000E7</div><div class="t" style="left:1026px;top:561px;font-size:16px;line-height:16px;color:#111;">R8</div><div style="position:absolute;left:1060px;top:558px;width:97px;height:25px;box-sizing:border-box;background:#fff;border:1px solid #808080;border-radius:1px;"></div><div class="c" style="left:1060px;top:556.5px;width:97px;height:25px;line-height:25px;font-size:17px;letter-spacing:1.3px;transform:scaleX(.82);text-indent:1.3px">15596568</div><div class="t" style="left:1026px;top:593px;font-size:16px;line-height:16px;color:#111;">R9</div><div style="position:absolute;left:1060px;top:590px;width:97px;height:25px;box-sizing:border-box;background:#fff;border:1px solid #808080;border-radius:1px;"></div><div class="c" style="left:1060px;top:588.5px;width:97px;height:25px;line-height:25px;font-size:17px;letter-spacing:1.3px;transform:scaleX(.82);text-indent:1.3px">2719FCC9</div><div class="t" style="left:1026px;top:626px;font-size:16px;line-height:16px;color:#111;">R10</div><div style="position:absolute;left:1060px;top:623px;width:97px;height:25px;box-sizing:border-box;background:#fff;border:1px solid #808080;border-radius:1px;"></div><div class="c" style="left:1060px;top:621.5px;width:97px;height:25px;line-height:25px;font-size:17px;letter-spacing:1.3px;transform:scaleX(.82);text-indent:1.3px">00C026BA</div><div class="t" style="left:1026px;top:657px;font-size:16px;line-height:16px;color:#111;">R11</div><div style="position:absolute;left:1060px;top:654px;width:97px;height:25px;box-sizing:border-box;background:#fff;border:1px solid #808080;border-radius:1px;"></div><div class="c" style="left:1060px;top:652.5px;width:97px;height:25px;line-height:25px;font-size:17px;letter-spacing:1.3px;transform:scaleX(.82);text-indent:1.3px">0061200B</div><div class="t" style="left:1194px;top:561px;font-size:16px;line-height:16px;color:#111;">R12</div><div style="position:absolute;left:1233px;top:558px;width:98px;height:25px;box-sizing:border-box;background:#fff;border:1px solid #808080;border-radius:1px;"></div><div class="c" style="left:1233px;top:556.5px;width:98px;height:25px;line-height:25px;font-size:17px;letter-spacing:1.3px;transform:scaleX(.82);text-indent:1.3px">000015FC</div><div class="t" style="left:1194px;top:593px;font-size:16px;line-height:16px;color:#111;">R13</div><div style="position:absolute;left:1233px;top:590px;width:98px;height:25px;box-sizing:border-box;background:#fff;border:1px solid #808080;border-radius:1px;"></div><div class="c" style="left:1233px;top:588.5px;width:98px;height:25px;line-height:25px;font-size:17px;letter-spacing:1.3px;transform:scaleX(.82);text-indent:1.3px">0000000D</div><div style="position:absolute;left:496px;top:705px;width:869px;height:115px;box-sizing:border-box;background:#fff;border:1px solid #6e6e6e;border-right:2px solid #777;border-bottom:2px solid #777;"></div><div style="position:absolute;left:1339px;top:707px;width:24px;height:111px;box-sizing:border-box;background:#f0f0f0;"></div><svg style="position:absolute;left:1344px;top:712px" width="14" height="12"><path d="M2 9 L7 4 L12 9" fill="none" stroke="#bbb" stroke-width="2"/></svg><svg style="position:absolute;left:1344px;top:800px" width="14" height="12"><path d="M2 3 L7 8 L12 3" fill="none" stroke="#bbb" stroke-width="2"/></svg><svg style="position:absolute;left:0;top:0" width="1385" height="831"><path d="M268.9 378.3 L275.9 378.3" stroke="#fff" stroke-width="5.2"/><path d="M282.8 378.3 L289.8 378.3" stroke="#fff" stroke-width="5.2"/><path d="M296.8 378.3 L303.8 378.3" stroke="#fff" stroke-width="5.2"/><path d="M310.7 378.3 L317.7 378.3" stroke="#fff" stroke-width="5.2"/><path d="M324.7 378.3 L331.7 378.3" stroke="#fff" stroke-width="5.2"/><path d="M338.6 378.3 L345.6 378.3" stroke="#fff" stroke-width="5.2"/><path d="M352.6 378.3 L359.6 378.3" stroke="#fff" stroke-width="5.2"/><path d="M366.5 378.3 L373.5 378.3" stroke="#fff" stroke-width="5.2"/><path d="M380.5 378.3 L387.5 378.3" stroke="#fff" stroke-width="5.2"/><path d="M394.4 378.3 L401.4 378.3" stroke="#fff" stroke-width="5.2"/><path d="M408.4 378.3 L415.4 378.3" stroke="#fff" stroke-width="5.2"/><path d="M422.3 378.3 L429.3 378.3" stroke="#fff" stroke-width="5.2"/><path d="M436.3 378.3 L443.3 378.3" stroke="#fff" stroke-width="5.2"/><path d="M450.2 378.3 L457.2 378.3" stroke="#fff" stroke-width="5.2"/><path d="M464.2 378.3 L471.2 378.3" stroke="#fff" stroke-width="5.2"/><path d="M478.1 378.3 L485.1 378.3" stroke="#fff" stroke-width="5.2"/><path d="M268.9 378.3 L275.9 378.3" stroke="#e4007f" stroke-width="3.2"/><path d="M282.8 378.3 L289.8 378.3" stroke="#e4007f" stroke-width="3.2"/><path d="M296.8 378.3 L303.8 378.3" stroke="#e4007f" stroke-width="3.2"/><path d="M310.7 378.3 L317.7 378.3" stroke="#e4007f" stroke-width="3.2"/><path d="M324.7 378.3 L331.7 378.3" stroke="#e4007f" stroke-width="3.2"/><path d="M338.6 378.3 L345.6 378.3" stroke="#e4007f" stroke-width="3.2"/><path d="M352.6 378.3 L359.6 378.3" stroke="#e4007f" stroke-width="3.2"/><path d="M366.5 378.3 L373.5 378.3" stroke="#e4007f" stroke-width="3.2"/><path d="M380.5 378.3 L387.5 378.3" stroke="#e4007f" stroke-width="3.2"/><path d="M394.4 378.3 L401.4 378.3" stroke="#e4007f" stroke-width="3.2"/><path d="M408.4 378.3 L415.4 378.3" stroke="#e4007f" stroke-width="3.2"/><path d="M422.3 378.3 L429.3 378.3" stroke="#e4007f" stroke-width="3.2"/><path d="M436.3 378.3 L443.3 378.3" stroke="#e4007f" stroke-width="3.2"/><path d="M450.2 378.3 L457.2 378.3" stroke="#e4007f" stroke-width="3.2"/><path d="M464.2 378.3 L471.2 378.3" stroke="#e4007f" stroke-width="3.2"/><path d="M478.1 378.3 L485.1 378.3" stroke="#e4007f" stroke-width="3.2"/><path d="M487.7 379.9 L487.7 386.9" stroke="#fff" stroke-width="5.2"/><path d="M487.7 393.9 L487.7 400.9" stroke="#fff" stroke-width="5.2"/><path d="M487.7 407.9 L487.7 414.9" stroke="#fff" stroke-width="5.2"/><path d="M487.7 421.9 L487.7 428.9" stroke="#fff" stroke-width="5.2"/><path d="M487.7 435.9 L487.7 442.9" stroke="#fff" stroke-width="5.2"/><path d="M487.7 449.9 L487.7 456.9" stroke="#fff" stroke-width="5.2"/><path d="M487.7 463.9 L487.7 470.9" stroke="#fff" stroke-width="5.2"/><path d="M487.7 477.9 L487.7 484.9" stroke="#fff" stroke-width="5.2"/><path d="M487.7 491.9 L487.7 498.9" stroke="#fff" stroke-width="5.2"/><path d="M487.7 505.9 L487.7 512.9" stroke="#fff" stroke-width="5.2"/><path d="M487.7 519.9 L487.7 526.9" stroke="#fff" stroke-width="5.2"/><path d="M487.7 533.9 L487.7 540.9" stroke="#fff" stroke-width="5.2"/><path d="M487.7 547.9 L487.7 554.9" stroke="#fff" stroke-width="5.2"/><path d="M487.7 561.9 L487.7 563.5" stroke="#fff" stroke-width="5.2"/><path d="M487.7 379.9 L487.7 386.9" stroke="#e4007f" stroke-width="3.2"/><path d="M487.7 393.9 L487.7 400.9" stroke="#e4007f" stroke-width="3.2"/><path d="M487.7 407.9 L487.7 414.9" stroke="#e4007f" stroke-width="3.2"/><path d="M487.7 421.9 L487.7 428.9" stroke="#e4007f" stroke-width="3.2"/><path d="M487.7 435.9 L487.7 442.9" stroke="#e4007f" stroke-width="3.2"/><path d="M487.7 449.9 L487.7 456.9" stroke="#e4007f" stroke-width="3.2"/><path d="M487.7 463.9 L487.7 470.9" stroke="#e4007f" stroke-width="3.2"/><path d="M487.7 477.9 L487.7 484.9" stroke="#e4007f" stroke-width="3.2"/><path d="M487.7 491.9 L487.7 498.9" stroke="#e4007f" stroke-width="3.2"/><path d="M487.7 505.9 L487.7 512.9" stroke="#e4007f" stroke-width="3.2"/><path d="M487.7 519.9 L487.7 526.9" stroke="#e4007f" stroke-width="3.2"/><path d="M487.7 533.9 L487.7 540.9" stroke="#e4007f" stroke-width="3.2"/><path d="M487.7 547.9 L487.7 554.9" stroke="#e4007f" stroke-width="3.2"/><path d="M487.7 561.9 L487.7 563.5" stroke="#e4007f" stroke-width="3.2"/><path d="M262.5 378.9 L262.5 385.9" stroke="#fff" stroke-width="5.2"/><path d="M262.5 392.9 L262.5 399.9" stroke="#fff" stroke-width="5.2"/><path d="M262.5 406.9 L262.5 413.9" stroke="#fff" stroke-width="5.2"/><path d="M262.5 420.9 L262.5 427.9" stroke="#fff" stroke-width="5.2"/><path d="M262.5 434.9 L262.5 441.9" stroke="#fff" stroke-width="5.2"/><path d="M262.5 448.9 L262.5 455.9" stroke="#fff" stroke-width="5.2"/><path d="M262.5 462.9 L262.5 469.9" stroke="#fff" stroke-width="5.2"/><path d="M262.5 476.9 L262.5 483.9" stroke="#fff" stroke-width="5.2"/><path d="M262.5 490.9 L262.5 497.9" stroke="#fff" stroke-width="5.2"/><path d="M262.5 504.9 L262.5 511.9" stroke="#fff" stroke-width="5.2"/><path d="M262.5 518.9 L262.5 525.9" stroke="#fff" stroke-width="5.2"/><path d="M262.5 532.9 L262.5 539.9" stroke="#fff" stroke-width="5.2"/><path d="M262.5 546.9 L262.5 553.9" stroke="#fff" stroke-width="5.2"/><path d="M262.5 560.9 L262.5 563.5" stroke="#fff" stroke-width="5.2"/><path d="M262.5 378.9 L262.5 385.9" stroke="#e4007f" stroke-width="3.2"/><path d="M262.5 392.9 L262.5 399.9" stroke="#e4007f" stroke-width="3.2"/><path d="M262.5 406.9 L262.5 413.9" stroke="#e4007f" stroke-width="3.2"/><path d="M262.5 420.9 L262.5 427.9" stroke="#e4007f" stroke-width="3.2"/><path d="M262.5 434.9 L262.5 441.9" stroke="#e4007f" stroke-width="3.2"/><path d="M262.5 448.9 L262.5 455.9" stroke="#e4007f" stroke-width="3.2"/><path d="M262.5 462.9 L262.5 469.9" stroke="#e4007f" stroke-width="3.2"/><path d="M262.5 476.9 L262.5 483.9" stroke="#e4007f" stroke-width="3.2"/><path d="M262.5 490.9 L262.5 497.9" stroke="#e4007f" stroke-width="3.2"/><path d="M262.5 504.9 L262.5 511.9" stroke="#e4007f" stroke-width="3.2"/><path d="M262.5 518.9 L262.5 525.9" stroke="#e4007f" stroke-width="3.2"/><path d="M262.5 532.9 L262.5 539.9" stroke="#e4007f" stroke-width="3.2"/><path d="M262.5 546.9 L262.5 553.9" stroke="#e4007f" stroke-width="3.2"/><path d="M262.5 560.9 L262.5 563.5" stroke="#e4007f" stroke-width="3.2"/><path d="M261.0 561.2 L268.0 561.2" stroke="#fff" stroke-width="5.2"/><path d="M275.0 561.2 L282.0 561.2" stroke="#fff" stroke-width="5.2"/><path d="M289.0 561.2 L296.0 561.2" stroke="#fff" stroke-width="5.2"/><path d="M303.0 561.2 L310.0 561.2" stroke="#fff" stroke-width="5.2"/><path d="M317.0 561.2 L324.0 561.2" stroke="#fff" stroke-width="5.2"/><path d="M331.0 561.2 L338.0 561.2" stroke="#fff" stroke-width="5.2"/><path d="M345.0 561.2 L352.0 561.2" stroke="#fff" stroke-width="5.2"/><path d="M359.0 561.2 L366.0 561.2" stroke="#fff" stroke-width="5.2"/><path d="M373.0 561.2 L380.0 561.2" stroke="#fff" stroke-width="5.2"/><path d="M387.0 561.2 L394.0 561.2" stroke="#fff" stroke-width="5.2"/><path d="M401.0 561.2 L408.0 561.2" stroke="#fff" stroke-width="5.2"/><path d="M415.0 561.2 L422.0 561.2" stroke="#fff" stroke-width="5.2"/><path d="M429.0 561.2 L436.0 561.2" stroke="#fff" stroke-width="5.2"/><path d="M443.0 561.2 L450.0 561.2" stroke="#fff" stroke-width="5.2"/><path d="M457.0 561.2 L464.0 561.2" stroke="#fff" stroke-width="5.2"/><path d="M471.0 561.2 L478.0 561.2" stroke="#fff" stroke-width="5.2"/><path d="M485.0 561.2 L490.0 561.2" stroke="#fff" stroke-width="5.2"/><path d="M261.0 561.2 L268.0 561.2" stroke="#e4007f" stroke-width="3.2"/><path d="M275.0 561.2 L282.0 561.2" stroke="#e4007f" stroke-width="3.2"/><path d="M289.0 561.2 L296.0 561.2" stroke="#e4007f" stroke-width="3.2"/><path d="M303.0 561.2 L310.0 561.2" stroke="#e4007f" stroke-width="3.2"/><path d="M317.0 561.2 L324.0 561.2" stroke="#e4007f" stroke-width="3.2"/><path d="M331.0 561.2 L338.0 561.2" stroke="#e4007f" stroke-width="3.2"/><path d="M345.0 561.2 L352.0 561.2" stroke="#e4007f" stroke-width="3.2"/><path d="M359.0 561.2 L366.0 561.2" stroke="#e4007f" stroke-width="3.2"/><path d="M373.0 561.2 L380.0 561.2" stroke="#e4007f" stroke-width="3.2"/><path d="M387.0 561.2 L394.0 561.2" stroke="#e4007f" stroke-width="3.2"/><path d="M401.0 561.2 L408.0 561.2" stroke="#e4007f" stroke-width="3.2"/><path d="M415.0 561.2 L422.0 561.2" stroke="#e4007f" stroke-width="3.2"/><path d="M429.0 561.2 L436.0 561.2" stroke="#e4007f" stroke-width="3.2"/><path d="M443.0 561.2 L450.0 561.2" stroke="#e4007f" stroke-width="3.2"/><path d="M457.0 561.2 L464.0 561.2" stroke="#e4007f" stroke-width="3.2"/><path d="M471.0 561.2 L478.0 561.2" stroke="#e4007f" stroke-width="3.2"/><path d="M485.0 561.2 L490.0 561.2" stroke="#e4007f" stroke-width="3.2"/><path d="M269.0 569.0 L276.0 569.0" stroke="#fff" stroke-width="5.2"/><path d="M283.0 569.0 L290.0 569.0" stroke="#fff" stroke-width="5.2"/><path d="M297.0 569.0 L304.0 569.0" stroke="#fff" stroke-width="5.2"/><path d="M311.0 569.0 L318.0 569.0" stroke="#fff" stroke-width="5.2"/><path d="M325.0 569.0 L332.0 569.0" stroke="#fff" stroke-width="5.2"/><path d="M339.0 569.0 L346.0 569.0" stroke="#fff" stroke-width="5.2"/><path d="M353.0 569.0 L360.0 569.0" stroke="#fff" stroke-width="5.2"/><path d="M367.0 569.0 L374.0 569.0" stroke="#fff" stroke-width="5.2"/><path d="M381.0 569.0 L388.0 569.0" stroke="#fff" stroke-width="5.2"/><path d="M395.0 569.0 L402.0 569.0" stroke="#fff" stroke-width="5.2"/><path d="M409.0 569.0 L416.0 569.0" stroke="#fff" stroke-width="5.2"/><path d="M423.0 569.0 L430.0 569.0" stroke="#fff" stroke-width="5.2"/><path d="M437.0 569.0 L444.0 569.0" stroke="#fff" stroke-width="5.2"/><path d="M451.0 569.0 L458.0 569.0" stroke="#fff" stroke-width="5.2"/><path d="M465.0 569.0 L472.0 569.0" stroke="#fff" stroke-width="5.2"/><path d="M479.0 569.0 L486.0 569.0" stroke="#fff" stroke-width="5.2"/><path d="M269.0 569.0 L276.0 569.0" stroke="#e4007f" stroke-width="3.2"/><path d="M283.0 569.0 L290.0 569.0" stroke="#e4007f" stroke-width="3.2"/><path d="M297.0 569.0 L304.0 569.0" stroke="#e4007f" stroke-width="3.2"/><path d="M311.0 569.0 L318.0 569.0" stroke="#e4007f" stroke-width="3.2"/><path d="M325.0 569.0 L332.0 569.0" stroke="#e4007f" stroke-width="3.2"/><path d="M339.0 569.0 L346.0 569.0" stroke="#e4007f" stroke-width="3.2"/><path d="M353.0 569.0 L360.0 569.0" stroke="#e4007f" stroke-width="3.2"/><path d="M367.0 569.0 L374.0 569.0" stroke="#e4007f" stroke-width="3.2"/><path d="M381.0 569.0 L388.0 569.0" stroke="#e4007f" stroke-width="3.2"/><path d="M395.0 569.0 L402.0 569.0" stroke="#e4007f" stroke-width="3.2"/><path d="M409.0 569.0 L416.0 569.0" stroke="#e4007f" stroke-width="3.2"/><path d="M423.0 569.0 L430.0 569.0" stroke="#e4007f" stroke-width="3.2"/><path d="M437.0 569.0 L444.0 569.0" stroke="#e4007f" stroke-width="3.2"/><path d="M451.0 569.0 L458.0 569.0" stroke="#e4007f" stroke-width="3.2"/><path d="M465.0 569.0 L472.0 569.0" stroke="#e4007f" stroke-width="3.2"/><path d="M479.0 569.0 L486.0 569.0" stroke="#e4007f" stroke-width="3.2"/><path d="M487.5 571.0 L487.5 578.0" stroke="#fff" stroke-width="5.2"/><path d="M487.5 585.0 L487.5 592.0" stroke="#fff" stroke-width="5.2"/><path d="M487.5 599.0 L487.5 606.0" stroke="#fff" stroke-width="5.2"/><path d="M487.5 613.0 L487.5 620.0" stroke="#fff" stroke-width="5.2"/><path d="M487.5 627.0 L487.5 634.0" stroke="#fff" stroke-width="5.2"/><path d="M487.5 641.0 L487.5 648.0" stroke="#fff" stroke-width="5.2"/><path d="M487.5 655.0 L487.5 662.0" stroke="#fff" stroke-width="5.2"/><path d="M487.5 669.0 L487.5 676.0" stroke="#fff" stroke-width="5.2"/><path d="M487.5 683.0 L487.5 690.0" stroke="#fff" stroke-width="5.2"/><path d="M487.5 697.0 L487.5 704.0" stroke="#fff" stroke-width="5.2"/><path d="M487.5 711.0 L487.5 718.0" stroke="#fff" stroke-width="5.2"/><path d="M487.5 725.0 L487.5 732.0" stroke="#fff" stroke-width="5.2"/><path d="M487.5 739.0 L487.5 746.0" stroke="#fff" stroke-width="5.2"/><path d="M487.5 753.0 L487.5 760.0" stroke="#fff" stroke-width="5.2"/><path d="M487.5 767.0 L487.5 774.0" stroke="#fff" stroke-width="5.2"/><path d="M487.5 781.0 L487.5 788.0" stroke="#fff" stroke-width="5.2"/><path d="M487.5 795.0 L487.5 802.0" stroke="#fff" stroke-width="5.2"/><path d="M487.5 809.0 L487.5 816.0" stroke="#fff" stroke-width="5.2"/><path d="M487.5 823.0 L487.5 823.5" stroke="#fff" stroke-width="5.2"/><path d="M487.5 571.0 L487.5 578.0" stroke="#e4007f" stroke-width="3.2"/><path d="M487.5 585.0 L487.5 592.0" stroke="#e4007f" stroke-width="3.2"/><path d="M487.5 599.0 L487.5 606.0" stroke="#e4007f" stroke-width="3.2"/><path d="M487.5 613.0 L487.5 620.0" stroke="#e4007f" stroke-width="3.2"/><path d="M487.5 627.0 L487.5 634.0" stroke="#e4007f" stroke-width="3.2"/><path d="M487.5 641.0 L487.5 648.0" stroke="#e4007f" stroke-width="3.2"/><path d="M487.5 655.0 L487.5 662.0" stroke="#e4007f" stroke-width="3.2"/><path d="M487.5 669.0 L487.5 676.0" stroke="#e4007f" stroke-width="3.2"/><path d="M487.5 683.0 L487.5 690.0" stroke="#e4007f" stroke-width="3.2"/><path d="M487.5 697.0 L487.5 704.0" stroke="#e4007f" stroke-width="3.2"/><path d="M487.5 711.0 L487.5 718.0" stroke="#e4007f" stroke-width="3.2"/><path d="M487.5 725.0 L487.5 732.0" stroke="#e4007f" stroke-width="3.2"/><path d="M487.5 739.0 L487.5 746.0" stroke="#e4007f" stroke-width="3.2"/><path d="M487.5 753.0 L487.5 760.0" stroke="#e4007f" stroke-width="3.2"/><path d="M487.5 767.0 L487.5 774.0" stroke="#e4007f" stroke-width="3.2"/><path d="M487.5 781.0 L487.5 788.0" stroke="#e4007f" stroke-width="3.2"/><path d="M487.5 795.0 L487.5 802.0" stroke="#e4007f" stroke-width="3.2"/><path d="M487.5 809.0 L487.5 816.0" stroke="#e4007f" stroke-width="3.2"/><path d="M487.5 823.0 L487.5 823.5" stroke="#e4007f" stroke-width="3.2"/><path d="M262.5 568.0 L262.5 575.0" stroke="#fff" stroke-width="5.2"/><path d="M262.5 581.5 L262.5 588.5" stroke="#fff" stroke-width="5.2"/><path d="M262.5 595.0 L262.5 602.0" stroke="#fff" stroke-width="5.2"/><path d="M262.5 608.5 L262.5 615.5" stroke="#fff" stroke-width="5.2"/><path d="M262.5 622.0 L262.5 629.0" stroke="#fff" stroke-width="5.2"/><path d="M262.5 635.5 L262.5 642.5" stroke="#fff" stroke-width="5.2"/><path d="M262.5 649.0 L262.5 656.0" stroke="#fff" stroke-width="5.2"/><path d="M262.5 662.5 L262.5 669.5" stroke="#fff" stroke-width="5.2"/><path d="M262.5 676.0 L262.5 683.0" stroke="#fff" stroke-width="5.2"/><path d="M262.5 689.5 L262.5 696.5" stroke="#fff" stroke-width="5.2"/><path d="M262.5 703.0 L262.5 710.0" stroke="#fff" stroke-width="5.2"/><path d="M262.5 716.5 L262.5 723.5" stroke="#fff" stroke-width="5.2"/><path d="M262.5 730.0 L262.5 737.0" stroke="#fff" stroke-width="5.2"/><path d="M262.5 743.5 L262.5 750.5" stroke="#fff" stroke-width="5.2"/><path d="M262.5 757.0 L262.5 764.0" stroke="#fff" stroke-width="5.2"/><path d="M262.5 770.5 L262.5 777.5" stroke="#fff" stroke-width="5.2"/><path d="M262.5 784.0 L262.5 791.0" stroke="#fff" stroke-width="5.2"/><path d="M262.5 797.5 L262.5 804.5" stroke="#fff" stroke-width="5.2"/><path d="M262.5 811.0 L262.5 818.0" stroke="#fff" stroke-width="5.2"/><path d="M262.5 568.0 L262.5 575.0" stroke="#e4007f" stroke-width="3.2"/><path d="M262.5 581.5 L262.5 588.5" stroke="#e4007f" stroke-width="3.2"/><path d="M262.5 595.0 L262.5 602.0" stroke="#e4007f" stroke-width="3.2"/><path d="M262.5 608.5 L262.5 615.5" stroke="#e4007f" stroke-width="3.2"/><path d="M262.5 622.0 L262.5 629.0" stroke="#e4007f" stroke-width="3.2"/><path d="M262.5 635.5 L262.5 642.5" stroke="#e4007f" stroke-width="3.2"/><path d="M262.5 649.0 L262.5 656.0" stroke="#e4007f" stroke-width="3.2"/><path d="M262.5 662.5 L262.5 669.5" stroke="#e4007f" stroke-width="3.2"/><path d="M262.5 676.0 L262.5 683.0" stroke="#e4007f" stroke-width="3.2"/><path d="M262.5 689.5 L262.5 696.5" stroke="#e4007f" stroke-width="3.2"/><path d="M262.5 703.0 L262.5 710.0" stroke="#e4007f" stroke-width="3.2"/><path d="M262.5 716.5 L262.5 723.5" stroke="#e4007f" stroke-width="3.2"/><path d="M262.5 730.0 L262.5 737.0" stroke="#e4007f" stroke-width="3.2"/><path d="M262.5 743.5 L262.5 750.5" stroke="#e4007f" stroke-width="3.2"/><path d="M262.5 757.0 L262.5 764.0" stroke="#e4007f" stroke-width="3.2"/><path d="M262.5 770.5 L262.5 777.5" stroke="#e4007f" stroke-width="3.2"/><path d="M262.5 784.0 L262.5 791.0" stroke="#e4007f" stroke-width="3.2"/><path d="M262.5 797.5 L262.5 804.5" stroke="#e4007f" stroke-width="3.2"/><path d="M262.5 811.0 L262.5 818.0" stroke="#e4007f" stroke-width="3.2"/><path d="M261.0 821.3 L268.0 821.3" stroke="#fff" stroke-width="5.2"/><path d="M274.5 821.3 L281.5 821.3" stroke="#fff" stroke-width="5.2"/><path d="M288.0 821.3 L295.0 821.3" stroke="#fff" stroke-width="5.2"/><path d="M301.5 821.3 L308.5 821.3" stroke="#fff" stroke-width="5.2"/><path d="M315.0 821.3 L322.0 821.3" stroke="#fff" stroke-width="5.2"/><path d="M328.5 821.3 L335.5 821.3" stroke="#fff" stroke-width="5.2"/><path d="M342.0 821.3 L349.0 821.3" stroke="#fff" stroke-width="5.2"/><path d="M355.5 821.3 L362.5 821.3" stroke="#fff" stroke-width="5.2"/><path d="M369.0 821.3 L376.0 821.3" stroke="#fff" stroke-width="5.2"/><path d="M382.5 821.3 L389.5 821.3" stroke="#fff" stroke-width="5.2"/><path d="M396.0 821.3 L403.0 821.3" stroke="#fff" stroke-width="5.2"/><path d="M409.5 821.3 L416.5 821.3" stroke="#fff" stroke-width="5.2"/><path d="M423.0 821.3 L430.0 821.3" stroke="#fff" stroke-width="5.2"/><path d="M436.5 821.3 L443.5 821.3" stroke="#fff" stroke-width="5.2"/><path d="M450.0 821.3 L457.0 821.3" stroke="#fff" stroke-width="5.2"/><path d="M463.5 821.3 L470.5 821.3" stroke="#fff" stroke-width="5.2"/><path d="M477.0 821.3 L484.0 821.3" stroke="#fff" stroke-width="5.2"/><path d="M261.0 821.3 L268.0 821.3" stroke="#e4007f" stroke-width="3.2"/><path d="M274.5 821.3 L281.5 821.3" stroke="#e4007f" stroke-width="3.2"/><path d="M288.0 821.3 L295.0 821.3" stroke="#e4007f" stroke-width="3.2"/><path d="M301.5 821.3 L308.5 821.3" stroke="#e4007f" stroke-width="3.2"/><path d="M315.0 821.3 L322.0 821.3" stroke="#e4007f" stroke-width="3.2"/><path d="M328.5 821.3 L335.5 821.3" stroke="#e4007f" stroke-width="3.2"/><path d="M342.0 821.3 L349.0 821.3" stroke="#e4007f" stroke-width="3.2"/><path d="M355.5 821.3 L362.5 821.3" stroke="#e4007f" stroke-width="3.2"/><path d="M369.0 821.3 L376.0 821.3" stroke="#e4007f" stroke-width="3.2"/><path d="M382.5 821.3 L389.5 821.3" stroke="#e4007f" stroke-width="3.2"/><path d="M396.0 821.3 L403.0 821.3" stroke="#e4007f" stroke-width="3.2"/><path d="M409.5 821.3 L416.5 821.3" stroke="#e4007f" stroke-width="3.2"/><path d="M423.0 821.3 L430.0 821.3" stroke="#e4007f" stroke-width="3.2"/><path d="M436.5 821.3 L443.5 821.3" stroke="#e4007f" stroke-width="3.2"/><path d="M450.0 821.3 L457.0 821.3" stroke="#e4007f" stroke-width="3.2"/><path d="M463.5 821.3 L470.5 821.3" stroke="#e4007f" stroke-width="3.2"/><path d="M477.0 821.3 L484.0 821.3" stroke="#e4007f" stroke-width="3.2"/><path d="M174 439 Q200 460 231 479" fill="none" stroke="#e4007f" stroke-width="2.4"/><path d="M174 633 Q200 655 231 674" fill="none" stroke="#e4007f" stroke-width="2.4"/><path d="M498 621 Q512 620 525 624" fill="none" stroke="#e4007f" stroke-width="2.2"/><path d="M498 656 Q512 660 526 670" fill="none" stroke="#e4007f" stroke-width="2.2"/><path d="M496 691 Q515 705 528 726" fill="none" stroke="#e4007f" stroke-width="2.2"/><path d="M448 740 Q475 770 525 780" fill="none" stroke="#e4007f" stroke-width="2.2"/><polygon points="259.2,495.5 235.6,473.3 227.9,484.4" fill="#d6127a" stroke="#fff" stroke-width="1" stroke-linejoin="miter"/><polygon points="258.7,688.9 235.6,668.2 227.9,679.2" fill="#d6127a" stroke="#fff" stroke-width="1" stroke-linejoin="miter"/><polygon points="467.6,621.4 498.7,614.5 498.7,628.4" fill="#d6127a" stroke="#fff" stroke-width="1" stroke-linejoin="miter"/><polygon points="467.6,654.5 498.7,649.6 499.3,663.5" fill="#d6127a" stroke="#fff" stroke-width="1" stroke-linejoin="miter"/><polygon points="467.6,682.6 500.7,684.2 498,696.5" fill="#d6127a" stroke="#fff" stroke-width="1" stroke-linejoin="miter"/><polygon points="427.2,720.4 453.7,735 443.8,744.3" fill="#d6127a" stroke="#fff" stroke-width="1" stroke-linejoin="miter"/></svg><div class="co" style="left:1.6px;top:340.6px;width:231.1px;height:99.59999999999997px;border-radius:13px;"></div><div class="t" style="left:9.8px;top:340.8px;font-size:27px;line-height:40px;letter-spacing:-0.5px;color:#231815">受信して復調した</div><div class="t" style="left:10.8px;top:370.3px;font-size:27px;line-height:40px;letter-spacing:0.87px;color:#231815">信号の周波数と</div><div class="t" style="left:10.4px;top:399.8px;font-size:27px;line-height:40px;letter-spacing:0px;color:#231815">レベル</div><div class="co" style="left:2px;top:564px;width:237.6px;height:70.29999999999995px;border-radius:16px;"></div><div class="t" style="left:9.6px;top:563.5px;font-size:27px;line-height:40px;letter-spacing:0px;color:#231815"><span style="font-size:29px;letter-spacing:-0.2px">MZ-mmCon1</span><span style="margin-left:6px">の</span></div><div class="t" style="left:9.1px;top:593.4px;font-size:27px;line-height:40px;letter-spacing:1.06px;color:#231815">内蔵信号源の設定</div><div class="co" style="left:523.3px;top:599.1px;width:325.20000000000005px;height:38.799999999999955px;border-radius:18px;"></div><div class="t" style="left:530.7px;top:599.7px;font-size:27px;line-height:40px;letter-spacing:0.97px;color:#231815">希望の周波数を入力する</div><div class="co" style="left:524.6px;top:641.5px;width:405.4px;height:68.5px;border-radius:18px;"></div><div class="t" style="left:532.8px;top:643px;font-size:27px;line-height:40px;letter-spacing:0.38px;color:#231815">実際に生成される信号の周波数</div><div class="t" style="left:532.8px;top:671.3px;font-size:27px;line-height:40px;letter-spacing:0px;color:#231815">が計算されて表示される</div><div class="co" style="left:526.3px;top:715.7px;width:243.10000000000002px;height:38.19999999999993px;border-radius:18px;"></div><div class="t" style="left:533.5px;top:714.6px;font-size:27px;line-height:40px;letter-spacing:0.74px;color:#231815">出力レベルの設定</div><div class="co" style="left:523.8px;top:762.9px;width:210.5px;height:38.60000000000002px;border-radius:18px;"></div><div class="t" style="left:531.5px;top:762.3px;font-size:27px;line-height:40px;letter-spacing:0.83px;color:#231815">データ長の設定</div>
</body></html>
